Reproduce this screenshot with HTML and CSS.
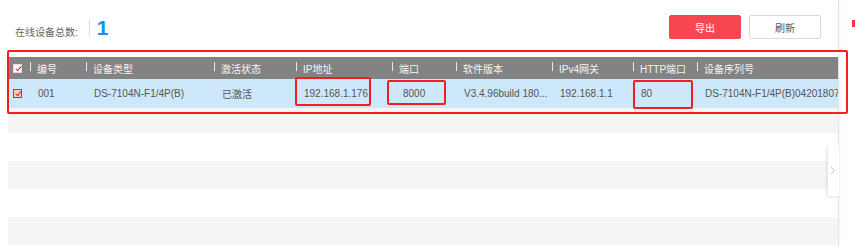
FILE: index.html
```html
<!DOCTYPE html>
<html lang="zh-CN">
<head>
    <meta charset="UTF-8">
    <title>在线设备</title>
    <link rel="stylesheet" href="styles.css">
</head>
<body>
    <div class="screen">
        <div class="panel">
            <div class="toolbar">
                <div class="summary">
                    <span class="summary-label">在线设备总数:</span>
                    <span class="summary-count">1</span>
                </div>
                <div class="actions">
                    <button class="btn btn-export">导出</button>
                    <button class="btn btn-refresh">刷新</button>
                </div>
            </div>

            <div class="device-table">
                <div class="row row-head">
                    <div class="cell cell-check"><span class="check check-head"></span></div>
                    <div class="cell">编号</div>
                    <div class="cell">设备类型</div>
                    <div class="cell">激活状态</div>
                    <div class="cell">IP地址</div>
                    <div class="cell">端口</div>
                    <div class="cell">软件版本</div>
                    <div class="cell">IPv4网关</div>
                    <div class="cell">HTTP端口</div>
                    <div class="cell">设备序列号</div>
                </div>
                <div class="row row-selected">
                    <div class="cell cell-check"><span class="check check-on"></span></div>
                    <div class="cell">001</div>
                    <div class="cell">DS-7104N-F1/4P(B)</div>
                    <div class="cell">已激活</div>
                    <div class="cell">192.168.1.176</div>
                    <div class="cell cell-port">8000</div>
                    <div class="cell">V3.4.96build 180...</div>
                    <div class="cell">192.168.1.1</div>
                    <div class="cell">80</div>
                    <div class="cell">DS-7104N-F1/4P(B)04201807</div>
                </div>
                <div class="row row-empty row-first-empty"></div>
                <div class="row row-empty"></div>
                <div class="row row-empty"></div>
                <div class="row row-empty"></div>
                <div class="row row-empty"></div>
            </div>
        </div>

        <div class="side-tab">
            <svg width="5" height="9" viewBox="0 0 5 9"><path d="M0.5 0.5 L4.3 4.5 L0.5 8.5" fill="none" stroke="#c8c8c8" stroke-width="1"/></svg>
        </div>
        <div class="edge-mark"></div>

        <div class="mark mark-row"></div>
        <div class="mark mark-ip"></div>
        <div class="mark mark-port"></div>
        <div class="mark mark-http"></div>
    </div>
</body>
</html>
```

FILE: styles.css
```css
body {
    margin: 0;
    background-color: #fff;
    font-family: "Liberation Sans", "Noto Sans CJK SC", sans-serif;
    font-size: 10px;
    color: #555;
}

.screen {
    position: relative;
    width: 855px;
    height: 247px;
    overflow: hidden;
}

.panel {
    width: 838px;
    height: 247px;
    border-right: 1px solid #e4e4e4;
    box-shadow: 1px 0 2px rgba(0, 0, 0, 0.05);
}

.toolbar {
    height: 50px;
    display: flex;
    justify-content: space-between;
    align-items: flex-start;
    padding: 0 17px 0 15px;
}

.summary {
    display: flex;
    align-items: flex-end;
    padding-top: 19px;
}

.summary-label {
    margin-bottom: -3px;
    padding-right: 11px;
    color: #666;
}

.summary-count {
    border-left: 1px solid #dcdcdc;
    padding-left: 7px;
    height: 17px;
    line-height: 17px;
    font-size: 21px;
    font-weight: bold;
    color: #1b8ff0;
}

.actions {
    display: flex;
    gap: 8px;
    padding-top: 15px;
}

.btn {
    width: 72px;
    height: 24px;
    border-radius: 2px;
    font-family: "Liberation Sans", "Noto Sans CJK SC", sans-serif;
    font-size: 10px;
    padding: 0;
}

.btn-export {
    background-color: #f7464f;
    border: 1px solid #f7464f;
    color: #fff;
}

.btn-refresh {
    background-color: #fff;
    border: 1px solid #d9d9d9;
    color: #555;
}

.device-table {
    margin: 7px 0 0 8px;
}

.row {
    display: grid;
    grid-template-columns: 22px 56px 128px 82px 96px 64px 96px 81px 64px 1fr;
    align-items: center;
    white-space: nowrap;
}

.row-head {
    height: 22px;
    background-color: #838383;
    color: #f4f4f4;
}

.row-head .cell {
    position: relative;
    padding-left: 7px;
}

.row-head .cell::before {
    content: "";
    position: absolute;
    left: 0;
    top: 1px;
    height: 9px;
    border-left: 1px solid #e8e8e8;
}

.row-head .cell-check::before {
    display: none;
}

.row-selected {
    height: 29px;
    background-color: #cde7fb;
}

.row-selected .cell {
    padding-left: 8px;
    overflow: hidden;
}

.row-selected .cell-port {
    padding-left: 11px;
}

.cell-check {
    padding-left: 5px !important;
    display: flex;
    align-items: center;
}

.check {
    display: inline-block;
    width: 9px;
    height: 9px;
    box-sizing: border-box;
    position: relative;
}

.check::after {
    content: "";
    position: absolute;
    left: 3px;
    top: 0px;
    width: 2px;
    height: 5px;
    border-right: 1px solid #e3262c;
    border-bottom: 1px solid #e3262c;
    transform: rotate(40deg);
}

.check-head {
    background-color: #fff;
    border: 1px solid #ddd;
}

.check-on {
    background-color: #f7c9cc;
    border: 1px solid #e3262c;
}

.row-empty {
    height: 28px;
}

.row-empty:nth-child(even) {
    background-color: #fff;
}

.row-empty:nth-child(odd) {
    background-color: #f5f5f6;
}

.row-first-empty {
    height: 25px;
    background-color: #f5f5f6 !important;
}

/* little drawer handle on the right edge */
.side-tab {
    position: absolute;
    left: 828px;
    top: 145px;
    width: 11px;
    height: 51px;
    background-color: #fff;
    box-shadow: -1px 1px 3px rgba(0, 0, 0, 0.12);
    display: flex;
    align-items: center;
    padding-left: 2px;
    box-sizing: border-box;
}

.edge-mark {
    position: absolute;
    left: 852px;
    top: 20px;
    width: 3px;
    height: 7px;
    background-color: #f23b3b;
}

/* red annotation frames */
.mark {
    position: absolute;
    border: 2px solid #f51d1d;
    border-radius: 2px;
    box-sizing: border-box;
}

.mark-row {
    left: 7px;
    top: 50px;
    width: 841px;
    height: 64px;
}

.mark-ip {
    left: 295px;
    top: 77px;
    width: 76px;
    height: 29px;
}

.mark-port {
    left: 387px;
    top: 80px;
    width: 59px;
    height: 25px;
}

.mark-http {
    left: 633px;
    top: 80px;
    width: 60px;
    height: 29px;
}
```
